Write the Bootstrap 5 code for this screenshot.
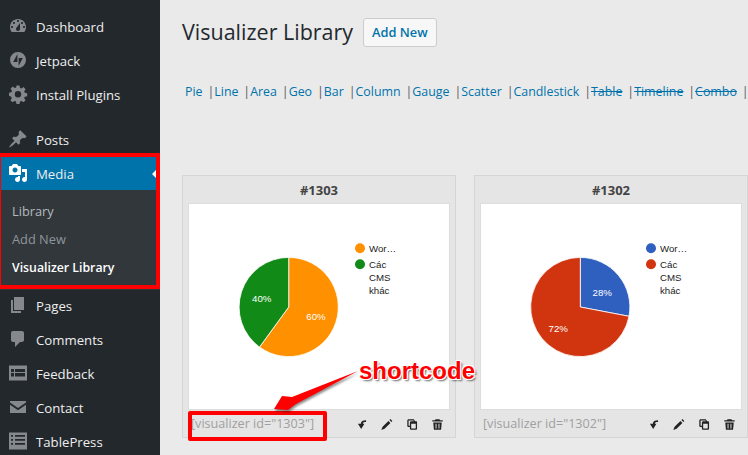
<!DOCTYPE html>
<html lang="en">
<head>
<meta charset="utf-8">
<link href="https://cdn.jsdelivr.net/npm/bootstrap@5.3.0/dist/css/bootstrap.min.css" rel="stylesheet">
<style>
html,body{height:455px;overflow:hidden}
body{background:#eaeaea;font-family:"Open Sans","Noto Sans",sans-serif;position:relative}
.wp-side{width:160px;height:455px;background:#23282d;flex:none}
.wp-item{height:34px;color:#eee;font-size:13.2px;text-decoration:none}
.wp-item svg{width:20px;height:20px;margin:0 8px 4px;fill:#85888d;flex:none}
.wp-top{padding-top:2px}
.wp-first{margin-top:10px}
.wp-gap{margin-top:11px}
.wp-current{background:#0073aa;height:33px;position:relative}
.wp-current .wp-item{height:33px;padding-top:3px}
.wp-current svg{fill:#fff}
.wp-current::after{content:"";position:absolute;right:3px;top:12px;border:5px solid transparent;border-left:0;border-right-color:#fff}
.wp-sub{background:#32373c;padding:7px 0;height:100px}
.wp-sub a{display:block;height:28px;line-height:28px;padding-left:12px;font-size:12.8px;color:#b4b9be;text-decoration:none}
.wp-sub a.wp-dim{color:#8f959b}
.wp-sub a.wp-on{color:#fff;font-weight:600;font-size:12.3px;line-height:30px}
.wp-main{padding:0 0 0 22px;min-width:0;flex:1}
.wp-head{height:64px;gap:10px}
.wp-title{font-size:21.5px;font-weight:400;color:#23282d;margin:0;line-height:1}
.wp-add{font-size:12.8px;font-weight:600;color:#0073aa;background:#f7f7f7;border:1px solid #ccc;border-radius:3px;padding:0 8px;height:29px;line-height:27px;text-decoration:none}
.wp-types{height:111px;padding:19px 0 0 3px;font-size:12.4px;word-spacing:1.7px;white-space:nowrap;color:#555;margin:0}
.wp-types a{color:#0073aa;text-decoration:none}
.wp-types s{color:#0073aa}
.wp-grid{gap:18px;width:600px}
.wp-tile{width:274px;height:263px;background:#e5e5e5;border:1px solid #d5d5d5;flex:none;padding:0 5px}
.wp-tile h6{font-family:"Open Sans",sans-serif;font-size:13px;font-weight:700;color:#444;text-align:center;margin:0;height:27px;line-height:29px}
.wp-chart{height:207px;background:#fff;border:1px solid #ddd}
.wp-chart svg{display:block}
.wp-chart text{font-family:"Liberation Sans",Arial,sans-serif;font-size:9.7px;fill:#222}
.wp-chart text.wp-pct{fill:#fff;text-anchor:middle}
.wp-foot{height:28px;padding-left:3px;font-size:12.6px;color:#a0a0a0}
.wp-tools{gap:12.500px;margin-left:auto;margin-right:6px}
.wp-tools svg{width:13px;height:13px;fill:#222;display:block}
.wp-redbox{position:absolute;border:4px solid #f00;pointer-events:none}
.wp-box1{left:0;top:153px;width:160px;height:136px;border-left-width:1px}
.wp-box2{left:188px;top:411px;width:139px;height:30px;border-radius:2px}
.wp-callout{position:absolute;left:359px;top:356px;font-family:"Liberation Sans",Arial,sans-serif;font-weight:700;font-size:24px;line-height:30px;color:#f00;text-shadow:1px 1px 0 #fff,-1px -1px 0 #fff,1px -1px 0 #fff,-1px 1px 0 #fff,2px 2px 2px #666}
.wp-arrow{position:absolute;left:270px;top:362px;filter:drop-shadow(1px 2px 1px rgba(0,0,0,.45))}
</style>
</head>
<body>
<div class="d-flex">
  <nav class="wp-side">
    <a class="wp-item wp-top wp-first d-flex align-items-center" href="#"><svg viewBox="0 0 20 20"><path fill-rule="evenodd" d="M3.760 16h12.480c1.100-1.370 1.760-3.110 1.760-5 0-4.420-3.580-8-8-8s-8 3.580-8 8c0 1.890.66 3.630 1.760 5zM10 4c.55 0 1 .45 1 1s-.45 1-1 1-1-.45-1-1 .45-1 1-1zM6 6c.55 0 1 .45 1 1s-.45 1-1 1-1-.45-1-1 .45-1 1-1zm8 0c.55 0 1 .45 1 1s-.45 1-1 1-1-.45-1-1 .45-1 1-1zm-5.370 5.550L12 7v6c0 1.100-.9 2-2 2s-2-.9-2-2c0-.57.24-1.080.63-1.450zM4 10c.55 0 1 .45 1 1s-.45 1-1 1-1-.45-1-1 .45-1 1-1zm12 0c.55 0 1 .45 1 1s-.45 1-1 1-1-.45-1-1 .45-1 1-1z"/></svg>Dashboard</a>
    <a class="wp-item wp-top d-flex align-items-center" href="#"><svg viewBox="0 0 20 20"><path fill-rule="evenodd" d="M10 2a8 8 0 1 0 0 16 8 8 0 0 0 0-16zM9.400 4v8H5.200zM10.600 16V8h4.200z"/></svg>Jetpack</a>
    <a class="wp-item wp-top d-flex align-items-center" href="#"><svg viewBox="0 0 20 20"><path fill-rule="evenodd" d="M8.500 1.500h3l.5 2.400 1.500.6 2-1.400 2.100 2.100-1.400 2 .6 1.500 2.400.5v3l-2.400.5-.6 1.500 1.400 2-2.100 2.100-2-1.400-1.500.6-.5 2.400h-3l-.5-2.400-1.500-.6-2 1.400-2.100-2.100 1.400-2-.6-1.500L1 11.700v-3l2.400-.5.6-1.500-1.400-2 2.100-2.100 2 1.400 1.500-.6zM10 7a3.200 3.200 0 1 0 0 6.400A3.200 3.200 0 0 0 10 7z"/></svg>Install Plugins</a>
    <a class="wp-item wp-top wp-gap d-flex align-items-center" href="#"><svg viewBox="0 0 20 20"><path d="M10.440 3.020l1.820-1.820 6.360 6.350-1.830 1.820c-1.050-.68-2.480-.57-3.410.36l-.75.75c-.92.93-1.040 2.350-.35 3.410l-1.830 1.820-2.410-2.410-2.800 2.790c-.42.42-3.380 2.710-3.800 2.290s1.860-3.390 2.280-3.810l2.790-2.790L4.100 9.360l1.830-1.820c1.050.69 2.480.57 3.410-.36l.75-.75c.93-.92 1.040-2.350.35-3.410z"/></svg>Posts</a>
    <div class="wp-current"><a class="wp-item d-flex align-items-center" href="#"><svg viewBox="0 0 20 20"><path d="M13 11V4c0-.55-.45-1-1-1h-1.670L9 1H5L3.670 3H2c-.55 0-1 .45-1 1v7c0 .55.45 1 1 1h10c.55 0 1-.45 1-1zM7 4.500c1.380 0 2.500 1.120 2.500 2.500S8.380 9.500 7 9.500 4.500 8.380 4.500 7 5.620 4.500 7 4.500zM14 6h5v10.500c0 1.380-1.120 2.500-2.500 2.500S14 17.880 14 16.500s1.120-2.500 2.500-2.500c.17 0 .34.020.5.050V9h-3V6zm-4 8.050V13h2v3.500c0 1.380-1.120 2.500-2.500 2.500S7 17.880 7 16.500 8.120 14 9.500 14c.17 0 .34.020.5.050z"/></svg>Media</a></div>
    <div class="wp-sub"><a href="#">Library</a><a class="wp-dim" href="#">Add New</a><a class="wp-on" href="#">Visualizer Library</a></div>
    <a class="wp-item d-flex align-items-center" href="#"><svg viewBox="0 0 20 20"><path d="M6 15V2h10v13H6zm-1 1h8v2H3V5h2v11z"/></svg>Pages</a>
    <a class="wp-item d-flex align-items-center" href="#"><svg viewBox="0 0 20 20"><path d="M5 2h9c1.100 0 2 .9 2 2v7c0 1.100-.9 2-2 2h-2l-5 5v-5H5c-1.100 0-2-.9-2-2V4c0-1.100.9-2 2-2z"/></svg>Comments</a>
    <a class="wp-item d-flex align-items-center" href="#"><svg viewBox="0 0 20 20"><path fill-rule="evenodd" d="M1 2.500h18v15H1zM3 6v3h3V6zM7 6v3h10V6zM3 10v3.500h3V10zM7 10v3.500h10V10z"/></svg>Feedback</a>
    <a class="wp-item d-flex align-items-center" href="#"><svg viewBox="0 0 20 20"><path d="M2 4h16v1.600l-8 5.400-8-5.400zM2 7.800l8 5.400 8-5.400V16H2z"/></svg>Contact</a>
    <a class="wp-item d-flex align-items-center" href="#"><svg viewBox="0 0 20 20"><path fill-rule="evenodd" d="M1 1.500h18v17H1zM3 4v1.800h2V4zM7 4v1.800h10V4zM3 8v1.800h2V8zM7 8v1.800h10V8zM3 12v1.800h2V12zM7 12v1.800h10V12z"/></svg>TablePress</a>
  </nav>
  <main class="wp-main">
    <div class="wp-head d-flex align-items-center">
      <h1 class="wp-title">Visualizer Library</h1>
      <a class="wp-add" href="#">Add New</a>
    </div>
    <p class="wp-types"><a href="#">Pie</a> |<a href="#">Line</a> |<a href="#">Area</a> |<a href="#">Geo</a> |<a href="#">Bar</a> |<a href="#">Column</a> |<a href="#">Gauge</a> |<a href="#">Scatter</a> |<a href="#">Candlestick</a> |<s>Table</s> |<s>Timeline</s> |<s>Combo</s> |</p>
    <div class="wp-grid d-flex">
      <section class="wp-tile">
        <h6>#1303</h6>
        <div class="wp-chart">
          <svg width="260" height="205" viewBox="0 0 260 205">
            <path d="M99.700 103V53.400A49.600 49.600 0 1 1 70.500 143.100Z" fill="#ff9000" stroke="#fff" stroke-width=".8"/>
            <path d="M99.700 103L70.500 143.100A49.600 49.600 0 0 1 99.700 53.400Z" fill="#128a18" stroke="#fff" stroke-width=".8"/>
            <text class="wp-pct" x="127" y="116">60%</text>
            <text class="wp-pct" x="72.700" y="98">40%</text>
            <circle cx="171" cy="44.300" r="5" fill="#ff9000"/><text x="180" y="48">Wor…</text>
            <circle cx="171" cy="60.300" r="5" fill="#128a18"/><text x="180" y="64">Các</text><text x="180" y="77">CMS</text><text x="180" y="90">khác</text>
          </svg>
        </div>
        <div class="wp-foot d-flex align-items-center">[visualizer id="1303"]
          <div class="wp-tools d-flex">
            <svg viewBox="0 0 20 20"><path d="M17 3.500c-5 0-8 1.500-8 5.500H4.500l5 8 5-8H12c0-2.500 2-3 5-3z"/></svg>
            <svg viewBox="0 0 20 20"><path d="M13 4.500l3 3-9 9-5 2 2-5zM14.500 3l1.500-1.500 3 3L17.500 6z"/></svg>
            <svg viewBox="0 0 20 20"><path fill-rule="evenodd" d="M4 2h8l2 3h2c.6 0 1 .4 1 1v10c0 1-.8 2-2 2H8c-1 0-2-1-2-2v-2H4c-1 0-2-1-2-2V4c0-1 1-2 2-2zM4 4v8h2V7c0-1 .8-2 2-2h4l-.5-1zM8 9v7h7V9z"/></svg>
            <svg viewBox="0 0 20 20"><path fill-rule="evenodd" d="M7 2h6l1 1.500h4v2H2v-2h4zM3.500 7h13l-1 11h-11zM7 9v7h1.500V9zM11.500 9v7H13V9z"/></svg>
          </div>
        </div>
      </section>
      <section class="wp-tile">
        <h6>#1302</h6>
        <div class="wp-chart">
          <svg width="260" height="205" viewBox="0 0 260 205">
            <path d="M99.300 103V53.400A49.600 49.600 0 0 1 148 112.300Z" fill="#3060bf" stroke="#fff" stroke-width=".8"/>
            <path d="M99.300 103L148 112.300A49.600 49.600 0 1 1 99.300 53.400Z" fill="#d0350f" stroke="#fff" stroke-width=".8"/>
            <text class="wp-pct" x="121.300" y="92">28%</text>
            <text class="wp-pct" x="77.300" y="128">72%</text>
            <circle cx="170" cy="44.300" r="5" fill="#3060bf"/><text x="179" y="48">Wor…</text>
            <circle cx="170" cy="60.300" r="5" fill="#d0350f"/><text x="179" y="64">Các</text><text x="179" y="77">CMS</text><text x="179" y="90">khác</text>
          </svg>
        </div>
        <div class="wp-foot d-flex align-items-center">[visualizer id="1302"]
          <div class="wp-tools d-flex">
            <svg viewBox="0 0 20 20"><path d="M17 3.500c-5 0-8 1.500-8 5.500H4.500l5 8 5-8H12c0-2.500 2-3 5-3z"/></svg>
            <svg viewBox="0 0 20 20"><path d="M13 4.500l3 3-9 9-5 2 2-5zM14.500 3l1.500-1.500 3 3L17.500 6z"/></svg>
            <svg viewBox="0 0 20 20"><path fill-rule="evenodd" d="M4 2h8l2 3h2c.6 0 1 .4 1 1v10c0 1-.8 2-2 2H8c-1 0-2-1-2-2v-2H4c-1 0-2-1-2-2V4c0-1 1-2 2-2zM4 4v8h2V7c0-1 .8-2 2-2h4l-.5-1zM8 9v7h7V9z"/></svg>
            <svg viewBox="0 0 20 20"><path fill-rule="evenodd" d="M7 2h6l1 1.500h4v2H2v-2h4zM3.500 7h13l-1 11h-11zM7 9v7h1.500V9zM11.500 9v7H13V9z"/></svg>
          </div>
        </div>
      </section>
    </div>
  </main>
</div>
<div class="wp-redbox wp-box1"></div>
<div class="wp-redbox wp-box2"></div>
<svg class="wp-arrow" width="92" height="50" viewBox="0 0 92 50"><path d="M88 9L26 42 18 48 4 47 12 34 22 35Z" fill="#f00"/></svg>
<div class="wp-callout">shortcode</div>
</body>
</html>
